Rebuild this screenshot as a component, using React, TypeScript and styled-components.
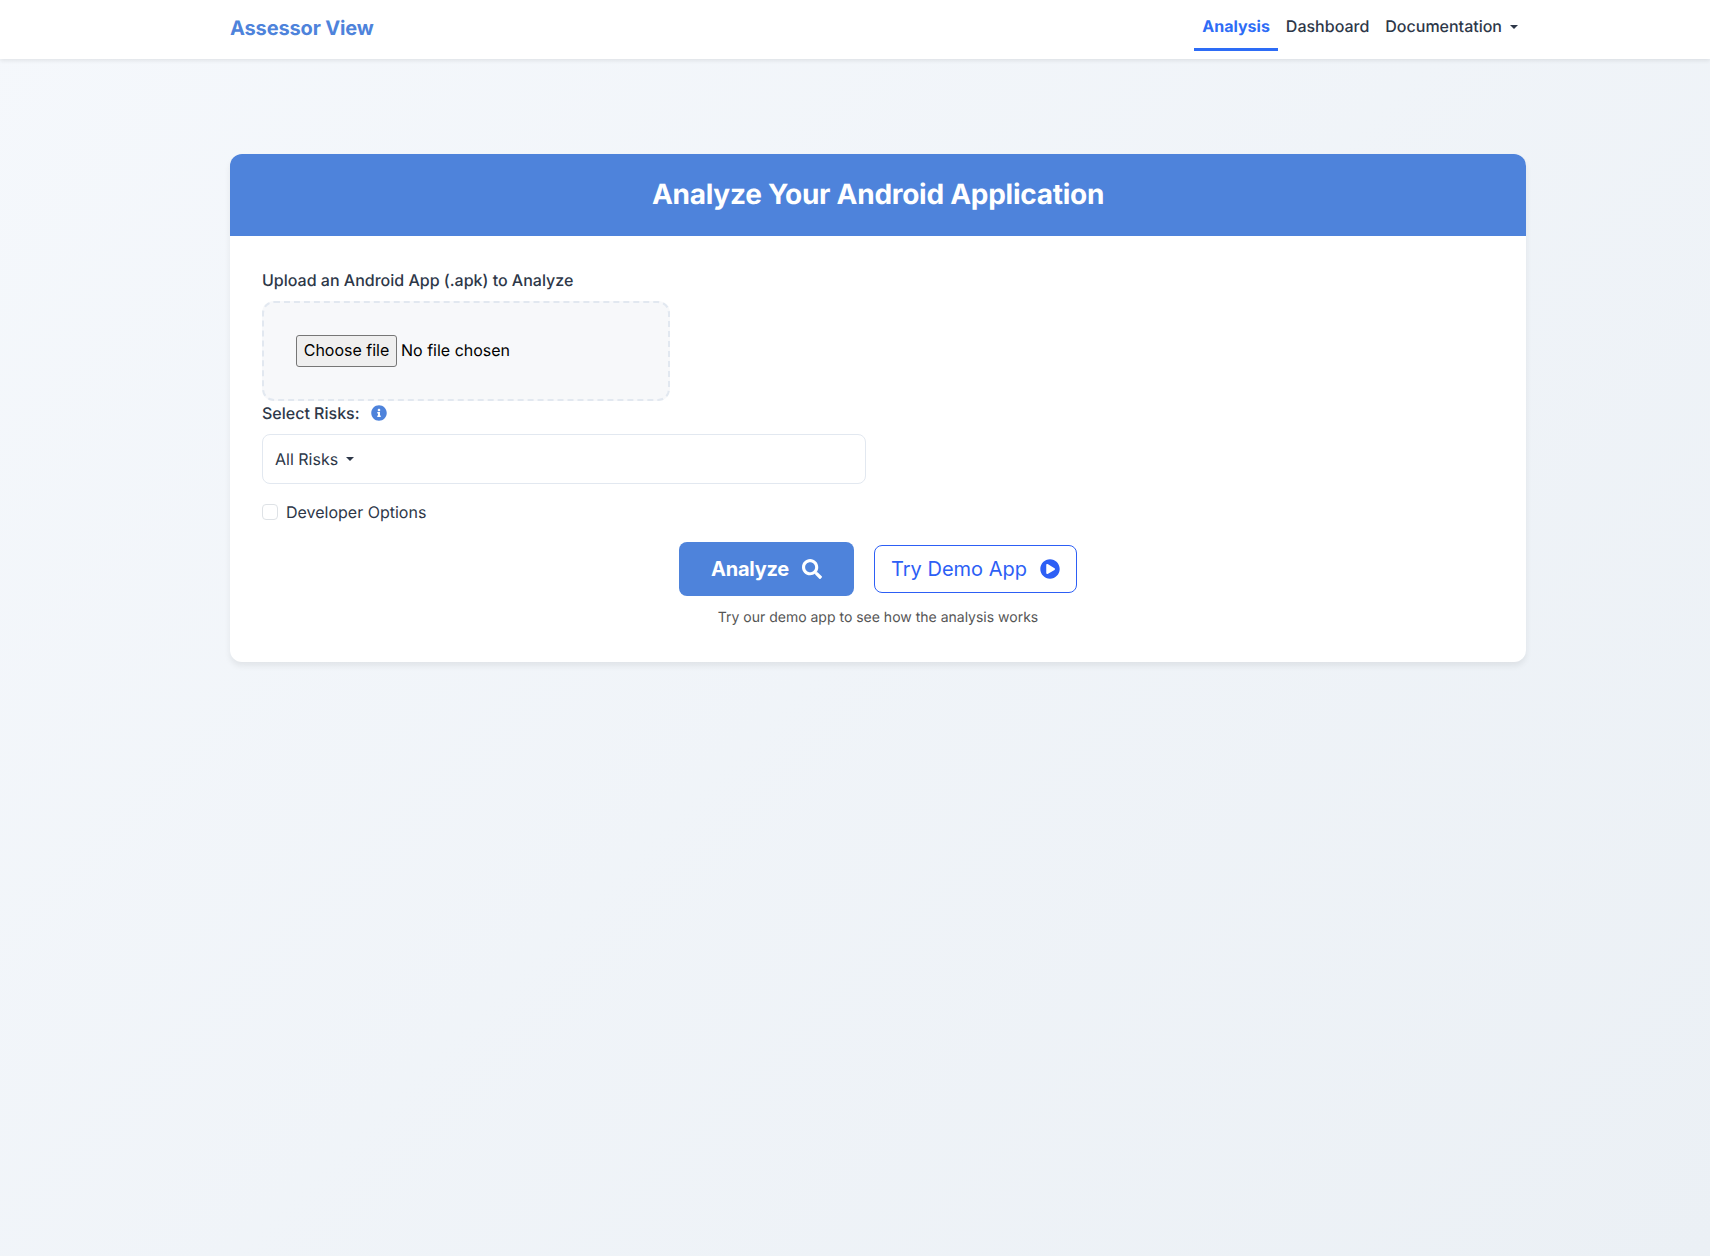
import React from "react";
import styled, { createGlobalStyle } from "styled-components";
import { FaSearch, FaPlayCircle, FaInfoCircle } from "react-icons/fa";

const Global = createGlobalStyle`
  html, body { margin: 0; padding: 0; }
  body {
    font-family: Inter, "Liberation Sans", sans-serif;
    text-rendering: geometricPrecision;
    color: #2d3748;
    font-size: 16px;
    line-height: 24px;
    min-height: 1256px;
    background: linear-gradient(135deg, #f5f8fc 0%, #ebf0f5 100%);
  }
`;

const Page = styled.div`
  min-height: 1256px;
`;

const Navbar = styled.nav`
  height: 59px;
  background: #fff;
  box-shadow: 0 2px 4px rgba(0, 0, 0, 0.08);
  padding: 0 184px 0 230px;
  display: flex;
  align-items: flex-start;
  justify-content: space-between;
`;

const Brand = styled.a`
  margin-top: 14px;
  font-size: 20px;
  line-height: 28px;
  font-weight: 700;
  letter-spacing: -0.15px;
  color: #4e83db;
`;

const NavList = styled.div`
  display: flex;
  align-items: flex-start;
`;

const NavLink = styled.a<{ $active?: boolean }>`
  height: 51px;
  box-sizing: border-box;
  padding: 14px 8px 0;
  font-size: 16px;
  line-height: 24px;
  font-weight: ${(p) => (p.$active ? 700 : 500)};
  color: ${(p) => (p.$active ? "#2d6cf6" : "#2d3748")};
  border-bottom: 3px solid ${(p) => (p.$active ? "#2d6cf6" : "transparent")};
`;

const Caret = styled.span<{ $gap: number }>`
  display: inline-block;
  margin-left: ${(p) => p.$gap}px;
  vertical-align: 3px;
  border-top: 4.8px solid currentColor;
  border-left: 4.8px solid transparent;
  border-right: 4.8px solid transparent;
`;

const Main = styled.main`
  padding: 95px 184px 0 230px;
`;

const Card = styled.section`
  background: #fff;
  border-radius: 12px;
  box-shadow: 0 4px 6px rgba(0, 0, 0, 0.07);
  overflow: hidden;
  height: 508px;
`;

const CardHeader = styled.header`
  height: 82px;
  background: #4e83db;
  display: flex;
  align-items: center;
  justify-content: center;
`;

const Title = styled.h1`
  margin: 0 0 2px;
  color: #fff;
  font-size: 28px;
  line-height: 34px;
  font-weight: 700;
  letter-spacing: -0.27px;
`;

const CardBody = styled.div`
  padding: 32px 32px 0;
`;

const FieldLabel = styled.label`
  display: block;
  font-weight: 500;
  font-size: 16px;
  line-height: 24px;
  color: #2d3748;
`;

const DropZone = styled.div`
  width: 408px;
  height: 100px;
  box-sizing: border-box;
  margin-top: 9px;
  border: 2px dashed #e2e8f0;
  border-radius: 12px;
  background: #f7f8fa;
  display: flex;
  align-items: center;
  gap: 4px;
  padding-left: 32px;
  color: #000;
`;

const FileButton = styled.button`
  width: 101px;
  height: 32px;
  padding: 0 0 2px;
  font-family: inherit;
  font-size: 16px;
  color: #000;
  background: #efefef;
  border: 1px solid #767676;
  border-radius: 3px;
`;

const FileName = styled.span`
  margin-bottom: 2px;
`;

const RiskRow = styled.div`
  display: flex;
  align-items: center;
  gap: 11.5px;
  height: 24px;
`;

const InfoIcon = styled(FaInfoCircle)`
  width: 16px;
  height: 16px;
  color: #4e83db;
`;

const Select = styled.div`
  width: 604px;
  height: 50px;
  box-sizing: border-box;
  margin-top: 9px;
  border: 1px solid #e2e8f0;
  border-radius: 8px;
  display: flex;
  align-items: center;
  padding-left: 12px;
  color: #2d3748;
`;

const CheckRow = styled.label`
  display: flex;
  align-items: center;
  gap: 8px;
  margin-top: 16px;
  height: 24px;
`;

const CheckBox = styled.input`
  appearance: none;
  width: 16px;
  height: 16px;
  margin: 0;
  background: #fff;
  border: 1px solid #dee2e6;
  border-radius: 4px;
`;

const Actions = styled.div`
  display: flex;
  justify-content: center;
  align-items: center;
  gap: 20px;
  margin-top: 18px;
`;

const PrimaryButton = styled.button`
  width: 175px;
  height: 54px;
  border: 0;
  border-radius: 8px;
  background: #4e83db;
  color: #fff;
  font-family: inherit;
  font-size: 20px;
  font-weight: 700;
  letter-spacing: -0.25px;
  display: flex;
  align-items: center;
  justify-content: center;
  gap: 13px;
`;

const OutlineButton = styled.button`
  width: 203px;
  height: 48px;
  background: #fff;
  border: 1px solid #2d5ff5;
  border-radius: 8px;
  color: #2d5ff5;
  font-family: inherit;
  font-size: 20px;
  font-weight: 400;
  display: flex;
  align-items: center;
  justify-content: center;
  gap: 13px;
`;

const SearchIcon = styled(FaSearch)`
  width: 20px;
  height: 20px;
`;

const PlayIcon = styled(FaPlayCircle)`
  width: 20px;
  height: 20px;
`;

const Note = styled.p`
  margin: 11px 0 0;
  text-align: center;
  font-size: 14px;
  line-height: 21px;
  color: #555;
`;

export default function App() {
  return (
    <Page>
      <Global />
      <Navbar>
        <Brand>Assessor View</Brand>
        <NavList>
          <NavLink $active>Analysis</NavLink>
          <NavLink>Dashboard</NavLink>
          <NavLink>
            Documentation
            <Caret $gap={8} />
          </NavLink>
        </NavList>
      </Navbar>
      <Main>
        <Card>
          <CardHeader>
            <Title>Analyze Your Android Application</Title>
          </CardHeader>
          <CardBody>
            <FieldLabel>Upload an Android App (.apk) to Analyze</FieldLabel>
            <DropZone>
              <FileButton type="button">Choose file</FileButton>
              <FileName>No file chosen</FileName>
            </DropZone>
            <RiskRow>
              <FieldLabel>Select Risks:</FieldLabel>
              <InfoIcon />
            </RiskRow>
            <Select>
              All Risks
              <Caret $gap={8} />
            </Select>
            <CheckRow>
              <CheckBox type="checkbox" />
              Developer Options
            </CheckRow>
            <Actions>
              <PrimaryButton>
                Analyze
                <SearchIcon />
              </PrimaryButton>
              <OutlineButton>
                Try Demo App
                <PlayIcon />
              </OutlineButton>
            </Actions>
            <Note>Try our demo app to see how the analysis works</Note>
          </CardBody>
        </Card>
      </Main>
    </Page>
  );
}
